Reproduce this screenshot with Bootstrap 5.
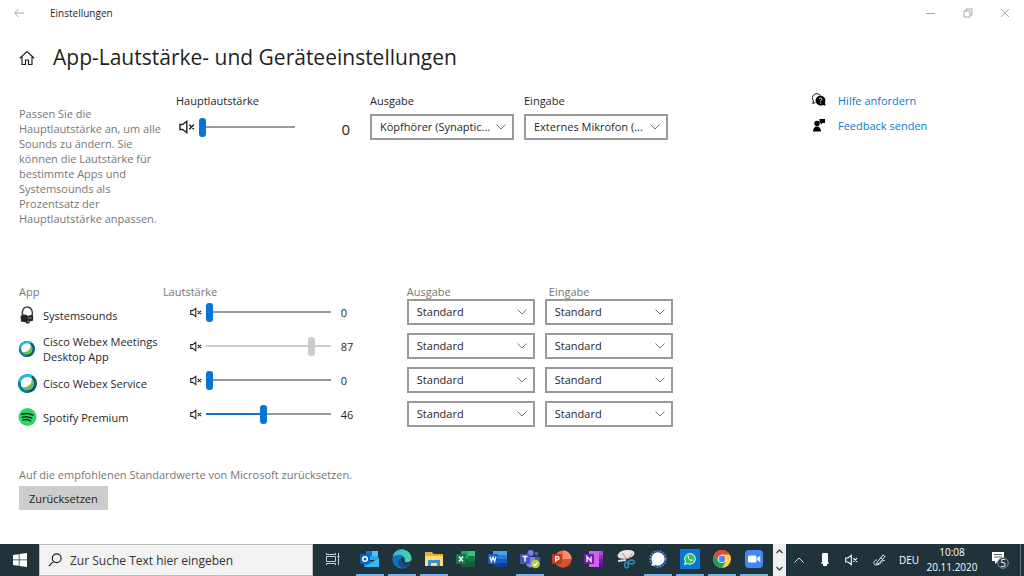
<!DOCTYPE html>
<html lang="de">
<head>
<meta charset="utf-8">
<meta name="viewport" content="width=device-width, initial-scale=1">
<title>Einstellungen</title>
<link href="https://cdn.jsdelivr.net/npm/bootstrap@5.3.0/dist/css/bootstrap.min.css" rel="stylesheet">
<style>
  body { font-family: "Open Sans", "Noto Sans", sans-serif; font-size: 11px; line-height: 15px; color: #1f1f1f; background: #fff; }
  svg { display: block; flex: none; }
  button { font: inherit; color: inherit; border: 0; background: none; padding: 0; }
  .titlebar { height: 26px; font-size: 10px; padding: 0 14px; gap: 26px; }
  .titlebar button { color: #a8a8a8; }
  .caption-tools { gap: 27px; }
  .page-title { font-size: 21px; line-height: 30px; font-weight: 400; }
  .page-head { padding: 16px 19px 0; gap: 18px; height: 67px; }
  .page-body { padding-left: 19px; }
  .soft { color: #767676; }
  .intro { width: 142px; padding-top: 13px; }
  .master-volume { width: 209px; padding-left: 15px; }
  .master-level { padding: 9px 20px 0 3px; gap: 4px; }
  .master-value { font-size: 15px; padding: 5px 0 0 42px; }
  .master { min-height: 192px; }
  .device { width: 144px; }
  .device + .device { margin-left: 10px; }
  .device label { margin-bottom: 6px; }
  .side { width: 212px; }
  .side a { color: #0f78c8; text-decoration: none; }
  .side li { height: 25px; gap: 12px; }
  .win-select {
    appearance: none; width: 100%; height: 26px; border: 2px solid #999; border-radius: 0; color: #1f1f1f;
    padding: 0 18px 0 8px; font-size: 11px; line-height: 20px; display: block;
    background: #fff url("data:image/svg+xml,%3Csvg xmlns='http://www.w3.org/2000/svg' viewBox='0 0 10 6'%3E%3Cpath d='M.5.5 5 5 9.5.5' fill='none' stroke='%23777'/%3E%3C/svg%3E") no-repeat right 6px center / 10px 6px;
  }
  .vol { appearance: none; --tone: #0a74d6; --rail: #9a9a9a; display: block; flex: 1; min-width: 0; height: 20px; margin: 0;
    background: linear-gradient(var(--tone), var(--tone)) no-repeat left center / var(--fill, 0%) 2px, linear-gradient(var(--rail), var(--rail)) no-repeat center / 100% 2px; }
  .vol::-webkit-slider-thumb { appearance: none; width: 7px; height: 19px; border-radius: 3px; background: var(--tone); border: 0; }
  .vol::-moz-range-thumb { width: 7px; height: 19px; border-radius: 3px; background: var(--tone); border: 0; }
  .vol:disabled { --tone: #ccc; --rail: #ccc; opacity: 1; }
  .mixer { width: 654px; max-width: 100%; table-layout: fixed; }
  .mixer th { font-weight: 400; height: 14px; line-height: 14px; padding: 0; }
  .mixer td { height: 34px; padding: 0; vertical-align: top; }
  .mixer .app-cell { vertical-align: middle; padding-bottom: 2px; }
  .mixer .out-cell { padding-right: 10px; }
  .app-label { gap: 7px; }
  .app-icon { width: 17px; overflow: visible; }
  .level { height: 26px; padding-left: 27px; padding-right: 42px; gap: 4px; }
  .level output { width: 30px; padding-left: 6px; }
  .reset-area { margin-top: 32px; padding-bottom: 33px; }
  .reset-btn { background: #ccc; height: 24px; padding: 0 10px; }
  .taskbar { height: 32px; background: #20323a; color: #fff; }
  .start { width: 39px; }
  .search { flex: 0 0 274px; background: #f2f2f2; border: 1px solid #bdbdbd; color: #222; gap: 8px; padding: 0 8px; }
  .search input { border: 0; background: none; outline: 0; font-size: 12px; color: #333; padding: 0; min-width: 0; }
  .search input::placeholder { color: #333; opacity: 1; }
  .task { width: 32px; height: 32px; border-bottom: 2px solid transparent; display: flex; align-items: center; justify-content: center; }
  .view { width: 41px; padding-right: 2px; }
  .open { border-image: linear-gradient(to right, transparent 4px, #76b4e8 4px, #76b4e8 28px, transparent 28px) 2; border-style: solid; border-width: 0 0 2px; }
  .scroller { width: 13px; margin-left: 3px; background: #f0f0f0; color: #444; padding: 5px 0; }
  .tray { font-size: 10px; }
  .tray-btn { width: 26px; height: 32px; display: flex; align-items: center; justify-content: center; }
  .pen { width: 30px; }
  .notes { width: 40px; }
  .clock { width: 56px; line-height: 15px; text-align: center; white-space: nowrap; }
  .lang { width: 30px; text-align: center; }
  .desk { border-left: 1px solid #65737a; width: 4px; }
</style>
</head>
<body class="d-flex flex-column min-vh-100">

<svg width="0" height="0" class="d-none" aria-hidden="true">
  <symbol id="mute" viewBox="0 0 14 12"><path d="M.8 3.8h2.4L6.8 1v10L3.2 8.2H.8z M9 4l4 4M13 4 9 8" fill="none" stroke="currentColor" stroke-width="1.2"/></symbol>
  <symbol id="webex" viewBox="0 0 20 20">
    <circle cx="10" cy="10" r="10" fill="#075a78"/>
    <path d="M3 17A10 10 0 0 1 15 1.300L14 5 6 15z" fill="#1fbbe0"/>
    <path d="M.2 8A10 10 0 0 0 9 19.900L11 16 4 10z" fill="#087fa6"/>
    <circle cx="10" cy="10" r="7" fill="#71c04f"/>
    <path d="M4.200 14A7 7 0 0 1 14.500 4.700C15 10 11 14.500 4.200 14z" fill="#fff"/>
  </symbol>
</svg>

<header class="titlebar d-flex align-items-center">
  <button type="button" aria-label="Zurück"><svg width="10" height="10" viewBox="0 0 10 10" fill="none" stroke="currentColor"><path d="M10 5H.8M4.500 1 .7 5l3.800 4"/></svg></button>
  <span>Einstellungen</span>
  <div class="caption-tools d-flex ms-auto">
    <button type="button" aria-label="Minimieren"><svg width="10" height="10" viewBox="0 0 10 10" stroke="currentColor"><path d="M0 5.500h9"/></svg></button>
    <button type="button" aria-label="Verkleinern"><svg width="10" height="10" viewBox="0 0 10 10" fill="none" stroke="currentColor"><path d="M1 3h6v6H1zM3 3V1h6v6H7"/></svg></button>
    <button type="button" aria-label="Schließen"><svg width="10" height="10" viewBox="0 0 10 10" stroke="currentColor"><path d="m1 1 8 8M9 1 1 9"/></svg></button>
  </div>
</header>

<div class="page-head d-flex align-items-start">
  <svg class="mt-2" width="16" height="16" viewBox="0 0 16 16" fill="none" stroke="#222" stroke-width="1.200"><path d="M.8 8.200 8 1.500l7.200 6.700M3 6.500v8h3.500V10h3v4.500H13v-8"/></svg>
  <h1 class="page-title m-0">App-Lautstärke- und Geräteeinstellungen</h1>
</div>

<div class="page-body d-flex">
  <main class="flex-grow-1">
    <section class="master d-flex align-items-start">
      <p class="intro soft m-0">Passen Sie die Hauptlautstärke an, um alle Sounds zu ändern. Sie können die Lautstärke für bestimmte Apps und Systemsounds als Prozentsatz der Hauptlautstärke anpassen.</p>
      <div class="master-volume">
        <label for="master">Hauptlautstärke</label>
        <div class="master-level d-flex align-items-center">
          <svg width="16" height="14"><use href="#mute"/></svg>
          <input class="vol" id="master" type="range" value="0">
          <output class="master-value" for="master">0</output>
        </div>
      </div>
      <div class="device">
        <label for="out0">Ausgabe</label>
        <select id="out0" class="win-select"><option>Köpfhörer (Synaptic...</option></select>
      </div>
      <div class="device">
        <label for="in0">Eingabe</label>
        <select id="in0" class="win-select"><option>Externes Mikrofon (...</option></select>
      </div>
    </section>

    <table class="mixer">
      <colgroup><col style="width:22%"><col style="width:37.300%"><col style="width:21.100%"><col></colgroup>
      <thead class="soft"><tr><th scope="col">App</th><th scope="col">Lautstärke</th><th scope="col">Ausgabe</th><th scope="col" class="ps-1">Eingabe</th></tr></thead>
      <tbody>
        <tr>
          <td class="app-cell"><div class="app-label d-flex align-items-center">
            <svg class="app-icon" width="17" height="18" viewBox="0 0 17 18"><path d="M3.500 10C2.500 4.500 4.500 1 8 1c4.500-.2 6.500 5 5 10" fill="none" stroke="#444" stroke-width="1.500"/><path d="M1.500 10.500 3.500 8.600l4 .2 1.200 1.200L12.500 8.700l1.800 1.600-.3 4.400-3 .6-.8 2-2.400.4-1.300-1.500-4.500-.6z" fill="#262626"/><path d="M9 12h3.500M8.500 15.500l1.500-.5" stroke="#999"/></svg>
            <span>Systemsounds</span></div></td>
          <td><div class="level d-flex align-items-center"><svg width="12" height="11"><use href="#mute"/></svg><input class="vol" id="v1" aria-label="Systemsounds" type="range" value="0"><output for="v1">0</output></div></td>
          <td class="out-cell"><select class="win-select" aria-label="Ausgabe Systemsounds"><option>Standard</option></select></td>
          <td><select class="win-select" aria-label="Eingabe Systemsounds"><option>Standard</option></select></td>
        </tr>
        <tr>
          <td class="app-cell"><div class="app-label d-flex align-items-center">
            <svg class="app-icon" width="17" height="16" viewBox="0 0 17 16"><use href="#webex" width="16" height="16"/></svg><span>Cisco Webex Meetings<br>Desktop App</span></div></td>
          <td><div class="level d-flex align-items-center"><svg width="12" height="11"><use href="#mute"/></svg><input class="vol" id="v2" aria-label="Cisco Webex Meetings" type="range" value="87" disabled style="--fill:87%"><output for="v2">87</output></div></td>
          <td class="out-cell"><select class="win-select" aria-label="Ausgabe Webex Meetings"><option>Standard</option></select></td>
          <td><select class="win-select" aria-label="Eingabe Webex Meetings"><option>Standard</option></select></td>
        </tr>
        <tr>
          <td class="app-cell"><div class="app-label d-flex align-items-center">
            <svg class="app-icon" width="17" height="19" viewBox="0 0 17 19"><use href="#webex" x="-1" width="19" height="19"/></svg><span>Cisco Webex Service</span></div></td>
          <td><div class="level d-flex align-items-center"><svg width="12" height="11"><use href="#mute"/></svg><input class="vol" id="v3" aria-label="Cisco Webex Service" type="range" value="0"><output for="v3">0</output></div></td>
          <td class="out-cell"><select class="win-select" aria-label="Ausgabe Webex Service"><option>Standard</option></select></td>
          <td><select class="win-select" aria-label="Eingabe Webex Service"><option>Standard</option></select></td>
        </tr>
        <tr>
          <td class="app-cell"><div class="app-label d-flex align-items-center">
            <svg class="app-icon" width="17" height="18" viewBox="0.500 0 17 18"><circle cx="9" cy="9" r="9" fill="#2fd566"/><path d="M3.500 6.200c4-1.200 8-.8 11 .9M4 9.200c3.500-1 6.500-.6 9.200.9M4.600 12c3-.8 5.300-.4 7.500.8" fill="none" stroke="#10301c" stroke-width="1.500" stroke-linecap="round"/></svg><span>Spotify Premium</span></div></td>
          <td><div class="level d-flex align-items-center"><svg width="12" height="11"><use href="#mute"/></svg><input class="vol" id="v4" aria-label="Spotify Premium" type="range" value="46" style="--fill:46%"><output for="v4">46</output></div></td>
          <td class="out-cell"><select class="win-select" aria-label="Ausgabe Spotify"><option>Standard</option></select></td>
          <td><select class="win-select" aria-label="Eingabe Spotify"><option>Standard</option></select></td>
        </tr>
      </tbody>
    </table>

    <section class="reset-area">
      <p class="soft mb-1">Auf die empfohlenen Standardwerte von Microsoft zurücksetzen.</p>
      <button type="button" class="reset-btn">Zurücksetzen</button>
    </section>
  </main>

  <aside class="side">
    <ul class="list-unstyled m-0">
      <li class="d-flex align-items-start"><svg width="14" height="14" viewBox="0 0 14 14"><path d="M3.500 9.500.8 10.500l.6-2.700A4.200 4.200 0 1 1 8 2.200" fill="none" stroke="#111"/><path d="M8.500 2.500a5 5 0 0 1 4.400 7.100l.7 3.200-2.800-.8A5 5 0 1 1 8.500 2.500z" fill="#000"/><path d="M7.200 6.200c.2-1.700 3-1.400 2.600.2-.2.800-1.200.9-1.200 2M8.600 9.600v1" fill="none" stroke="#fff"/></svg><a href="#">Hilfe anfordern</a></li>
      <li class="d-flex align-items-start"><svg width="14" height="14" viewBox="0 0 14 14"><circle cx="5" cy="5.500" r="2.700"/><path d="M1 13.500c0-3 1.500-5 4-5s4 2 4 5zM7.500 1H13v4h-2.500L8.800 6.800V5H7.500z"/></svg><a href="#">Feedback senden</a></li>
    </ul>
  </aside>
</div>

<footer class="taskbar d-flex align-items-stretch mt-auto">
  <button type="button" class="start d-flex align-items-center justify-content-center" aria-label="Start"><svg width="14" height="14" viewBox="0 0 14 14" fill="#fff"><path d="M0 2 5.800 1.200v5.400H0zM6.500 1.100 14 0v6.600H6.500zM0 7.300h5.800v5.400L0 12zM6.500 7.300H14V14l-7.500-1.100z"/></svg></button>
  <label class="search d-flex align-items-center"><svg width="14" height="14" viewBox="0 0 14 14" fill="none" stroke="#222" stroke-width="1.200"><circle cx="8.700" cy="5.300" r="4.400"/><path d="M5.600 8.400.8 13.200"/></svg><input class="flex-grow-1" type="text" aria-label="Suche" placeholder="Zur Suche Text hier eingeben"></label>
  <nav class="d-flex" aria-label="Apps">
    <button type="button" class="task view" aria-label="Taskansicht"><svg width="14" height="14" viewBox="0 0 14 14" fill="none" stroke="#ccd3d6"><path d="M.5 1v1.500h9V1M.5 13v-1.500h9V13M.5 4.500h9v5h-9zM12.500 1v12M11.500 4.500h2"/></svg></button>
    <button type="button" class="task open" aria-label="Outlook"><svg width="20" height="20" viewBox="0 0 20 20"><path d="M6 2h12v9H6z" fill="#28a8ea"/><path d="M6 2h6v5H6z" fill="#0f78d4"/><path d="M12 2h6v5h-6z" fill="#4cc2f5"/><path d="M4 18V9l8 4 7-4v9z" fill="#1490df"/><path d="m4 18 15-9v9z" fill="#35b8f1"/><rect y="5" width="10" height="10" rx="1" fill="#0b64bb"/><circle cx="5" cy="10" r="2.300" fill="none" stroke="#fff" stroke-width="1.500"/></svg></button>
    <button type="button" class="task open" aria-label="Edge"><svg width="20" height="20" viewBox="0 0 20 20"><circle cx="10" cy="10" r="9.500" fill="#1687cf"/><path d="M.8 8C2 2 8-1 13.500 1.200c5 2 7 7.300 5.500 10.200-1.300 2.400-5.500 2.300-6.600.8 1.600-2 .5-5.700-3.400-6.200C5.500 5.500 2 6 .8 8z" fill="#45cbae"/><path d="M.8 8C2 2 8-1 12 .8 9 4 3 3 .8 8z" fill="#27b9dc"/><path d="M7 9c-2.500 4 .5 8.500 5 9.500-6 2.500-11-2-11.500-8C1.500 6 6 5 9.500 6.500 8.500 7 7.700 7.800 7 9z" fill="#0f70bd"/><path d="M8.500 9c-1 4 4 7.500 9.500 5.500-1.500 3-4 4.500-7 4.300C5 17 5 11 8.500 9z" fill="#17468f"/><path d="M12.400 12.200c1 1.500 5 1.600 6.600-.8l1 2.600-2.500.8c-5 1.400-8.500-1.800-9-4.800l1.500-2c2 0 3.300 2 2.400 4.200z" fill="#20323a"/></svg></button>
    <button type="button" class="task open" aria-label="Explorer"><svg width="18" height="16" viewBox="0 0 18 16"><path d="M0 1h7l1.500 2H18v12H0z" fill="#e9ad33"/><path d="M0 5h18v10H0z" fill="#ffdb79"/><path d="M3 15V9h12v6h-3v-3H6v3z" fill="#3693d8"/></svg></button>
    <button type="button" class="task" aria-label="Excel"><svg width="20" height="18" viewBox="0 0 20 18"><path d="M5 1h14v16H5z" fill="#21a366"/><path d="M12 1h7v5h-7z" fill="#33c481"/><path d="M5 9h7v8H5zM12 12h7v5h-7z" fill="#185c37"/><path d="M12 6h7v6h-7z" fill="#107c41"/><rect y="4" width="10" height="10" rx="1" fill="#107c41"/><path d="m3 6.500 4 5M7 6.500l-4 5" stroke="#fff" stroke-width="1.500"/></svg></button>
    <button type="button" class="task" aria-label="Word"><svg width="20" height="18" viewBox="0 0 20 18"><path d="M5 1h14v4H5z" fill="#41a5ee"/><path d="M5 5h14v4H5z" fill="#2b7cd3"/><path d="M5 9h14v4H5z" fill="#185abd"/><path d="M5 13h14v4H5z" fill="#103f91"/><rect y="4" width="10" height="10" rx="1" fill="#185abd"/><path d="m2 6.500 1.400 5L5 7l1.600 4.500L8 6.500" fill="none" stroke="#fff" stroke-width="1.200"/></svg></button>
    <button type="button" class="task open" aria-label="Teams"><svg width="20" height="20" viewBox="0 0 20 20"><circle cx="10.500" cy="4" r="3" fill="#7b83eb"/><circle cx="16.500" cy="4.700" r="2" fill="#5059c9"/><path d="M13 8h7v5a3.500 3.500 0 0 1-7 1z" fill="#5059c9"/><path d="M6 8h9v6c0 6-9 6-9 0z" fill="#7b83eb"/><rect y="5" width="10" height="10" rx="1" fill="#4b53bc"/><path d="M2.500 7.500h5M5 7.500v5" stroke="#fff" stroke-width="1.400"/><circle cx="15.500" cy="15" r="4.300" fill="#b5d334"/><path d="m13.500 15 1.500 1.500 2.700-3" fill="none" stroke="#fff" stroke-width="1.200"/></svg></button>
    <button type="button" class="task" aria-label="PowerPoint"><svg width="20" height="18" viewBox="0 0 20 18"><circle cx="11" cy="9" r="8.500" fill="#ed6c47"/><path d="M11 .5A8.500 8.500 0 0 1 19.500 9H11z" fill="#ff8f6b"/><path d="M2.500 9h17a8.500 8.500 0 0 1-17 0z" fill="#d35230"/><rect y="4" width="10" height="10" rx="1" fill="#c43e1c"/><path d="M3.700 12V6.700h1.500c2.400 0 2.400 3.200 0 3.200H3.700" fill="none" stroke="#fff" stroke-width="1.300"/></svg></button>
    <button type="button" class="task" aria-label="OneNote"><svg width="20" height="18" viewBox="0 0 20 18"><path d="M5 1h13v16H5z" fill="#ca64ea"/><path d="M15 1h4v4h-4z" fill="#ae4bd5"/><path d="M15 5h4v4h-4z" fill="#9332bf"/><path d="M15 9h4v4h-4z" fill="#7719aa"/><path d="M15 13h4v4h-4z" fill="#5d1692"/><rect y="4" width="10" height="10" rx="1" fill="#7719aa"/><path d="M3 12V6.500l4 5v-5" fill="none" stroke="#fff" stroke-width="1.300"/></svg></button>
    <button type="button" class="task" aria-label="Snipping Tool"><svg width="20" height="20" viewBox="0 0 20 20"><path d="M1.500 7C2 3 7 1 11 1c4-.5 7 .5 7.500 3 0 3-4 5-7.500 5.500C7 10 2 10 1.500 7z" fill="#e8e4e2"/><path d="m6 4 5 6M16.500 4 12 10" stroke="#c9857b"/><path d="m2 12 8-1" stroke="#ddd" stroke-width="1.800"/><ellipse cx="10.500" cy="16" rx="1.800" ry="2.900" fill="none" stroke="#2f86b0" stroke-width="1.600"/><ellipse cx="15.500" cy="13" rx="2.900" ry="1.900" fill="none" stroke="#2f86b0" stroke-width="1.600"/></svg></button>
    <button type="button" class="task open" aria-label="Signal"><svg width="18" height="18" viewBox="0 0 18 18"><circle cx="9" cy="9" r="8" fill="none" stroke="#4a86f2" stroke-width="1.600" stroke-dasharray="2 1"/><path d="M9 2.300a6.700 6.700 0 1 1-3 12.700l-3.500 1 .9-3.400A6.700 6.700 0 0 1 9 2.300z" fill="#fff"/></svg></button>
    <button type="button" class="task open" aria-label="WhatsApp"><svg width="20" height="20" viewBox="0 0 20 20"><path d="M0 0h20v20H0z" fill="#0878d2"/><path d="m4.500 15.500.9-2.900A5.300 5.300 0 1 1 7.500 14.600z" fill="#2dc454" stroke="#fff"/><path d="M7.500 7.300c.3 3 2 4.500 4.700 5l.8-1.400-1.600-.7-.7.700c-1.100-.5-1.600-1.200-2-2.100l.6-.7-.6-1.400z" fill="#fff"/></svg></button>
    <button type="button" class="task open" aria-label="Chrome"><svg width="18" height="18" viewBox="0 0 18 18"><circle cx="9" cy="9" r="9" fill="#ffcd40"/><path d="M1.200 4.500A9 9 0 0 1 16.800 4.500H9L5.100 11.200z" fill="#de4a3e"/><path d="M1.200 4.500A9 9 0 0 0 9 18l3.900-6.800H5.100z" fill="#199e5b"/><circle cx="9" cy="9" r="4.300" fill="#fff"/><circle cx="9" cy="9" r="3.400" fill="#4b8bf0"/></svg></button>
    <button type="button" class="task open" aria-label="Zoom"><svg width="18" height="18" viewBox="0 0 18 18"><rect width="18" height="18" rx="4" fill="#4087f5"/><rect x="3" y="5.500" width="8.500" height="7" rx="1.500" fill="#fff"/><path d="m12.200 8 3-2.300v6.600l-3-2.300z" fill="#fff"/></svg></button>
  </nav>
  <div class="scroller d-flex flex-column align-items-center justify-content-between">
    <svg width="7" height="5" viewBox="0 0 7 5" fill="none" stroke="currentColor" stroke-width="1.300"><path d="m.5 4 3-3 3 3"/></svg>
    <svg width="7" height="5" viewBox="0 0 7 5" fill="none" stroke="currentColor" stroke-width="1.300"><path d="m.5 1 3 3 3-3"/></svg>
  </div>
  <div class="tray d-flex align-items-center ms-auto">
    <button type="button" class="tray-btn" aria-label="Weitere Symbole"><svg width="10" height="6" viewBox="0 0 10 6" fill="none" stroke="#e5e8e9"><path d="M.5 5.500 5 1l4.500 4.500"/></svg></button>
    <button type="button" class="tray-btn" aria-label="Mikrofon"><svg width="10" height="14" viewBox="0 0 10 14" fill="#fff"><rect x="2" width="6" height="11" rx="1"/><path d="M1.500 9h7v2H7v2H3v-2H1.500z"/></svg></button>
    <button type="button" class="tray-btn" aria-label="Ton aus"><svg width="13" height="12"><use href="#mute"/></svg></button>
    <button type="button" class="tray-btn pen" aria-label="Stift"><svg width="13" height="12" viewBox="0 0 13 12" fill="none" stroke="#e5e8e9"><path d="M4 8.500 10 1l2 1.500L6 9.500l-2.500.7zM4 6C0 6 0 11 3 11s5-2 6-3.500 3-1 3-1M7.500 3.500l3 3"/></svg></button>
    <span class="lang">DEU</span>
    <div class="clock">10:08<br>20.11.2020</div>
    <button type="button" class="tray-btn notes" aria-label="5 Benachrichtigungen"><svg width="18" height="18" viewBox="0 0 18 18"><path d="M1 1h12v9H7l-3 3v-3H1z" fill="#fff"/><path d="M3 3.500h8M3 6h8" stroke="#56636a"/><circle cx="12" cy="12" r="5.300" fill="#263840" stroke="#85929a"/><text x="12" y="15.500" font-size="10" text-anchor="middle" fill="#fff">5</text></svg></button>
    <span class="desk align-self-stretch"></span>
  </div>
</footer>

<script src="https://cdn.jsdelivr.net/npm/bootstrap@5.3.0/dist/js/bootstrap.bundle.min.js"></script>
</body>
</html>
